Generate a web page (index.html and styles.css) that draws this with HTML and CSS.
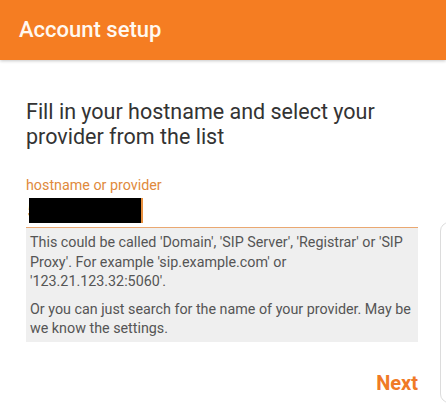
FILE: index.html
```html
<!DOCTYPE html>
<html>
<head>
<meta charset="utf-8">
<link rel="stylesheet" href="styles.css">
</head>
<body>
<header class="appbar">
  <h1 class="title">Account setup</h1>
</header>
<main class="content">
  <h2 class="heading">Fill in your hostname and select your provider from the list</h2>
  <div class="field">
    <label class="label">hostname or provider</label>
    <div class="input">
      <span class="value">5</span><span class="redact"></span><span class="cursor"></span>
    </div>
  </div>
  <div class="help">
    <p>This could be called 'Domain', 'SIP Server', 'Registrar' or 'SIP Proxy'. For example 'sip.example.com' or '123.21.123.32:5060'.</p>
    <p>Or you can just search for the name of your provider. May be we know the settings.</p>
  </div>
  <div class="actions">
    <span class="next">Next</span>
  </div>
</main>
<div class="edge-handle"></div>
</body>
</html>
```
FILE: styles.css
```css
html, body {
  margin: 0;
  padding: 0;
  background: #ffffff;
  font-family: Roboto, "Liberation Sans", sans-serif;
  width: 446px;
  height: 408px;
  overflow: hidden;
}

.appbar {
  height: 60px;
  background: #f57d22;
  display: flex;
  align-items: center;
  padding-left: 19px;
  box-shadow: 0 1px 3px rgba(0, 0, 0, 0.22);
  position: relative;
  z-index: 1;
}

.title {
  margin: 0;
  margin-top: -1px;
  font-size: 22px;
  font-weight: 500;
  color: #fff8f0;
}

.content {
  padding: 39px 28px 0 26px;
}

.heading {
  margin: 0;
  font-size: 21.5px;
  font-weight: 400;
  line-height: 25px;
  color: #333333;
}

.field {
  margin-top: 27px;
}

.label {
  display: block;
  font-size: 14.3px;
  line-height: 18px;
  color: #e08a3c;
}

.input {
  display: flex;
  align-items: center;
  height: 33px;
  border-bottom: 1.5px solid #eaa871;
  padding-left: 1px;
}

.value {
  font-size: 19px;
  color: #333;
  width: 2px;
  overflow: hidden;
}

.redact {
  width: 112px;
  height: 25px;
  background: #000;
}

.cursor {
  width: 2px;
  height: 25px;
  background: #e8903f;
}

.help {
  background: #efefef;
  padding: 5px 4px 3px 4px;
  font-size: 14.3px;
  line-height: 19.5px;
  color: #555555;
}

.help p {
  margin: 0;
}

.help p + p {
  margin-top: 8px;
}

.actions {
  display: flex;
  justify-content: flex-end;
  margin-top: 29px;
}

.next {
  font-size: 20px;
  line-height: 24px;
  font-weight: 700;
  color: #f07a26;
}

.edge-handle {
  position: absolute;
  left: 440px;
  top: 222px;
  width: 20px;
  height: 181px;
  border: 1px solid #dcdcdc;
  border-radius: 9px;
  box-sizing: border-box;
}
```
